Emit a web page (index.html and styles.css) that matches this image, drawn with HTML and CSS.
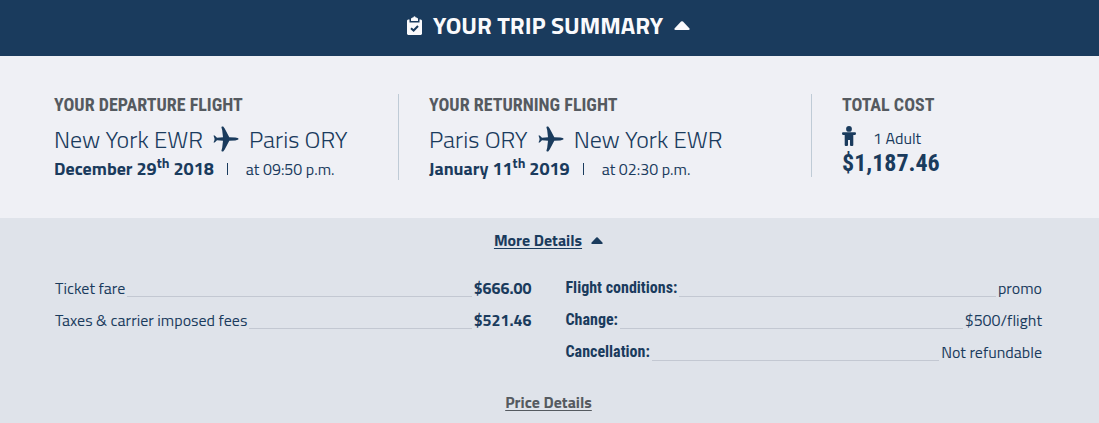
FILE: index.html
```html
<!DOCTYPE html>
<html lang="en">
<head>
<meta charset="utf-8">
<meta name="viewport" content="width=device-width, initial-scale=1">
<title>Your trip summary</title>
<link rel="stylesheet" href="styles.css">
</head>
<body>
<svg class="symbols" aria-hidden="true">
  <symbol id="plane" viewBox="0 0 26 26">
    <path d="M.5 9.500h1.200l2.300 2.300 6-.5-.8-7L8.400 1.200 8.900.5h1.300l1.500 2L16.300 11.300l6 .3q3 .4 3.500 1.400-.5 1-3.500 1.400l-6 .3-4.600 8.800-1.500 2H8.900l-.5-.7.8-3.100.8-7-6-.5-2.300 2.300H.5l1-2.500v-1.400z"/>
  </symbol>
  <symbol id="caret" viewBox="0 0 16 9">
    <path d="M7 .6Q8-.3 9 .6l6.500 7Q16 9 14.500 9h-13Q0 9 .5 7.600z"/>
  </symbol>
</svg>
<header>
  <button class="banner" type="button" aria-expanded="true">
    <svg class="clipboard" viewBox="0 0 15 19" aria-hidden="true">
      <path class="fill" d="M0 4.500 1 3.500H2.500V6.500H12.500V3.500H14L15 4.500V18L14 19H1L0 18z"/>
      <path class="fill" d="M4 5V2.500L5.500 1.500H6.200Q7.500-1.200 8.800 1.500H9.500L11 2.500V5z"/>
      <path class="check" d="M4 12.200 6.600 14.500 11 10"/>
    </svg>
    <span>YOUR TRIP SUMMARY</span>
    <svg class="caret" aria-hidden="true"><use href="#caret"/></svg>
  </button>
</header>
<main>
  <div class="summary">
    <section class="flight">
      <h2>YOUR DEPARTURE FLIGHT</h2>
      <p class="route">New York EWR <svg class="plane" role="img" aria-label="to"><use href="#plane"/></svg> Paris ORY</p>
      <p class="when"><strong>December 29<sup>th</sup> 2018</strong><span class="bar"></span><span class="time">at 09:50 p.m.</span></p>
    </section>
    <section class="flight">
      <h2>YOUR RETURNING FLIGHT</h2>
      <p class="route">Paris ORY <svg class="plane" role="img" aria-label="to"><use href="#plane"/></svg> New York EWR</p>
      <p class="when"><strong>January 11<sup>th</sup> 2019</strong><span class="bar"></span><span class="time">at 02:30 p.m.</span></p>
    </section>
    <section class="cost">
      <h2>TOTAL COST</h2>
      <p class="people">
        <svg class="person" viewBox="0 0 14 20" aria-hidden="true"><circle cx="7" cy="2.900" r="2.900"/><path d="M1 6.300h12q1 0 1 1.300t-1 1.300h-1.700V19q0 1-1 1H9q-1 0-1-1v-5H6v5q0 1-1 1H3.700q-1 0-1-1V8.900H1q-1 0-1-1.300t1-1.300z"/></svg>
        1 Adult
      </p>
      <p class="total">$1,187.46</p>
    </section>
  </div>
  <div class="details">
    <button class="toggle" type="button" aria-expanded="true"><span>More Details</span><svg class="caret small" aria-hidden="true"><use href="#caret"/></svg></button>
    <div class="lists">
      <dl class="fares">
        <div class="row"><dt>Ticket fare</dt><dd>$666.00</dd></div>
        <div class="row"><dt>Taxes &amp; carrier imposed fees</dt><dd>$521.46</dd></div>
      </dl>
      <dl class="terms">
        <div class="row"><dt>Flight conditions:</dt><dd>promo</dd></div>
        <div class="row"><dt>Change:</dt><dd>$500/flight</dd></div>
        <div class="row"><dt>Cancellation:</dt><dd>Not refundable</dd></div>
      </dl>
    </div>
    <a class="price" href="#price">Price Details</a>
  </div>
</main>
</body>
</html>
```
FILE: styles.css
```css
* { box-sizing: border-box; }
body {
  margin: 0;
  background: #dfe3ea;
  color: #1a3b5d;
  font-family: "Titillium Web", Roboto, "Noto Sans", sans-serif;
  font-size: 16px;
  line-height: 24px;
}
h2, p, dl, dd { margin: 0; }
button { border: 0; color: inherit; font: inherit; cursor: pointer; }
svg { fill: currentColor; }
.symbols { position: absolute; width: 0; height: 0; }
.banner {
  display: flex;
  align-items: center;
  justify-content: center;
  gap: 11px;
  width: 100%;
  height: 56px;
  padding: 0 2px 6px 0;
  background: #1a3b5d;
  color: #fafafc;
  font-size: 24px;
  font-weight: 700;
}
.clipboard { width: 15px; height: 19px; }
.clipboard .fill { stroke: #1a3b5d; stroke-width: 1; paint-order: stroke; }
.clipboard .check { fill: none; stroke: #1a3b5d; stroke-width: 2; }
.caret { width: 16px; height: 9px; }
.summary {
  display: grid;
  grid-template-columns: 345fr 413fr 257fr;
  align-items: start;
  padding: 38px 30px 38px 54px;
  background: #eff0f5;
}
.flight { height: 86px; border-right: 1px solid #bfcbd6; }
.flight + .flight, .cost { padding-left: 30px; }
.flight + .flight { height: 83px; }
h2 {
  color: #555a60;
  font-family: "Roboto Condensed", Roboto, sans-serif;
  font-size: 18px;
  font-weight: 700;
  line-height: 22px;
}
.route {
  display: flex;
  align-items: center;
  gap: 10px;
  margin-top: 5px;
  font-size: 24px;
  font-weight: 300;
  line-height: 36px;
}
.plane { width: 26px; height: 26px; }
.when { display: flex; align-items: center; }
.when strong { font-size: 18px; }
sup { font-size: 14px; line-height: 0; }
.bar { width: 1px; height: 12px; margin: 0 18px 0 13px; background: currentColor; }
.people { display: flex; align-items: center; gap: 17px; margin-top: 10px; }
.person { width: 14px; height: 20px; margin-bottom: 4px; }
.total {
  font-family: "Roboto Condensed", Roboto, sans-serif;
  font-size: 24px;
  font-weight: 700;
  line-height: 26px;
}
.details {
  display: flex;
  flex-direction: column;
  align-items: center;
  padding: 10px 57px 9px 55px;
}
.toggle {
  display: flex;
  align-items: center;
  gap: 9px;
  padding: 0;
  background: none;
  font-weight: 700;
}
.toggle span, .price { text-decoration: underline; text-underline-offset: 2px; }
.small { width: 12px; height: 7px; }
.lists {
  display: grid;
  grid-template-columns: 1fr 1fr;
  gap: 34px;
  width: 100%;
  margin-top: 20px;
}
.row { display: flex; gap: 2px; height: 32px; line-height: 32px; }
.row::after { content: ""; order: 1; flex: 1; height: 24px; border-bottom: 1px solid #c3c8d2; }
.row dd { order: 2; }
.fares dd { font-weight: 700; }
.terms dt { font-family: "Roboto Condensed", Roboto, sans-serif; font-weight: 700; }
.price { margin-top: 22px; color: #555a60; font-weight: 700; }
```
